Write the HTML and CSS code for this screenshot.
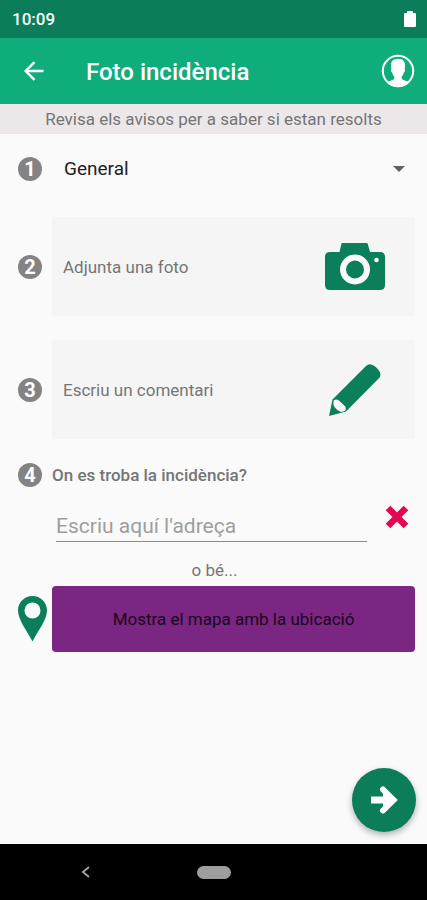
FILE: index.html
```html
<!DOCTYPE html>
<html lang="ca">
<head>
  <meta charset="utf-8">
  <meta name="viewport" content="width=device-width, initial-scale=1">
  <title>Foto incidència</title>
  <link rel="stylesheet" href="styles.css">
</head>
<body>
  <div class="status">
    <span>10:09</span>
    <svg class="battery" width="12" height="16" viewBox="0 0 12 16" aria-hidden="true"><path fill="#fff" d="M3 2V1q0-1 1-1h4q1 0 1 1v1h2q1 0 1 1v12q0 1-1 1H1q-1 0-1-1V3q0-1 1-1z"/></svg>
  </div>
  <header class="appbar">
    <button class="icon-button" type="button" aria-label="Enrere">
      <svg width="20" height="20" viewBox="0 0 20 20" fill="none" stroke="#fff" stroke-width="2.400"><path d="M19.500 10H2M10.500 1.200L1.700 10l8.800 8.800"/></svg>
    </button>
    <h1 class="title">Foto incidència</h1>
    <button class="icon-button" type="button" aria-label="Perfil">
      <svg width="34" height="34" viewBox="0 0 34 34"><circle cx="17" cy="17" r="15.200" fill="none" stroke="#fff" stroke-width="2"/><path fill="#fff" d="M17 4.800c5 0 7.400 2.700 7 7.400l-.3 2.800c.8.300.3 3-.8 3.500-.4 2-1.200 3.200-2.200 4.100v2.200c1.200 1.700 4.700 1.900 7.300 3.600C25.200 31.200 21.400 33 17 33S8.800 31.200 6 28.400c2.600-1.700 6.100-1.900 7.300-3.600v-2.200c-1-.9-1.800-2.100-2.200-4.100-1.100-.5-1.600-3.200-.8-3.500L10 12.200c-.4-4.700 2-7.400 7-7.400z"/></svg>
    </button>
  </header>
  <p class="notice">Revisa els avisos per a saber si estan resolts</p>

  <main class="content">
    <form class="form">
      <div class="row row-select">
        <span class="badge">1</span>
        <div class="select">
          <select class="select-field" aria-label="Tipus d'incidència"><option>General</option></select>
          <svg class="caret" width="12" height="6" viewBox="0 0 12 6" aria-hidden="true"><path fill="#616161" d="M0 0h12L6 6z"/></svg>
        </div>
      </div>

      <div class="row">
        <span class="badge">2</span>
        <button class="card" type="button">
          <span>Adjunta una foto</span>
          <svg width="60" height="48" viewBox="0 0 60 48" aria-hidden="true"><path fill="#0b7f5b" d="M17.500 0h24q1 0 1.300 1L45 9h10q5 0 5 5v28q0 5-5 5H5q-5 0-5-5V14q0-5 5-5h9.500l1.900-8q.2-1 1.100-1z"/><circle cx="30" cy="26.500" r="12" fill="#0b7f5b" stroke="#fafafa" stroke-width="6"/><circle cx="51.500" cy="17" r="2.300" fill="#fafafa"/></svg>
        </button>
      </div>

      <div class="row">
        <span class="badge">3</span>
        <button class="card" type="button">
          <span>Escriu un comentari</span>
          <svg width="60" height="54" viewBox="0 0 60 54" aria-hidden="true"><path fill="#0b7f5b" d="M4 53L7.500 36.500 41 3q4-4 9.500.8l2.200 2.200q5 5.500 1 9.500L21 48.500z"/><path fill="#fafafa" d="M8.800 37.200q2.500-1.500 4.500-.2l7 6.500q1.200 2.500-.3 4.300-2.500 1.500-5 .7-5.800-2.700-6.700-7.500z"/></svg>
        </button>
      </div>

      <div class="row">
        <span class="badge">4</span>
        <label class="question" for="address">On es troba la incidència?</label>
      </div>

      <div class="address">
        <input class="address-field" id="address" type="text" placeholder="Escriu aquí l'adreça">
        <button class="icon-button" type="button" aria-label="Esborra l'adreça">
          <svg width="24" height="24" viewBox="0 0 24 24"><path fill="none" stroke="#e6054f" stroke-width="6.500" d="M3 3l18 18M21 3L3 21"/></svg>
        </button>
      </div>

      <p class="or">o bé...</p>

      <div class="row">
        <svg class="pin" width="29" height="46" viewBox="0 0 29 46" aria-hidden="true"><path fill="#0b7f5b" fill-rule="evenodd" d="M14.500 0C6.500 0 0 6.300 0 14.300 0 24 8.500 34 14.500 45.500 20.500 34 29 24 29 14.300 29 6.300 22.500 0 14.500 0zm0 6.500a8 8 0 1 1 0 16 8 8 0 0 1 0-16z"/></svg>
        <button class="map-button" type="button">Mostra el mapa amb la ubicació</button>
      </div>
    </form>

    <button class="fab" type="button" aria-label="Continua">
      <svg width="28" height="28" viewBox="0 0 28 28"><path fill="none" stroke="#fff" stroke-width="7" d="M1 14h18"/><path fill="#fff" stroke="#fff" stroke-width="6" stroke-linecap="round" d="M13 3.500L23.500 14 13 24.500"/></svg>
    </button>
  </main>

  <nav class="navbar" aria-label="Sistema">
    <button class="icon-button" type="button" aria-label="Torna">
      <svg width="10" height="12" viewBox="0 0 10 12" fill="none" stroke="#9e9e9e" stroke-width="2"><path d="M8 1L2 6l6 5"/></svg>
    </button>
    <button class="home" type="button" aria-label="Inici"></button>
  </nav>
</body>
</html>
```

FILE: styles.css
```css
* {
  box-sizing: border-box;
}

body {
  margin: 0;
  min-height: 100vh;
  display: flex;
  flex-direction: column;
  background: #fafafa;
  color: #757575;
  font-family: Roboto, sans-serif;
  font-size: 17px;
  line-height: 20px;
}

button,
input,
select {
  margin: 0;
  padding: 0;
  border: 0;
  background: none;
  color: inherit;
  font: inherit;
}

p,
h1 {
  margin: 0;
}

svg {
  display: block;
  flex: none;
}

.status {
  display: flex;
  align-items: center;
  justify-content: space-between;
  height: 38px;
  padding: 0 11px 0 12px;
  background: #0b7d5a;
  color: #fff;
  font-weight: 500;
}

.appbar {
  display: flex;
  align-items: center;
  height: 66px;
  padding: 0 12px 0 24px;
  background: #0fad7c;
  color: #fff;
}

.title {
  flex: 1;
  padding: 2px 0 0 42px;
  font-size: 24px;
  font-weight: 500;
  line-height: 32px;
}

.notice {
  padding: 5px 0;
  background: #ece8ea;
  text-align: center;
}

.content {
  position: relative;
  flex: 1;
}

.form {
  display: flex;
  flex-direction: column;
  gap: 24px;
  padding: 11px 12px 24px 18px;
}

.row {
  display: grid;
  grid-template-columns: 34px 1fr;
  align-items: center;
}

.badge {
  display: flex;
  align-items: center;
  justify-content: center;
  width: 24px;
  height: 24px;
  border-radius: 50%;
  background: #858283;
  color: #fff;
  font-size: 20px;
  font-weight: 700;
}

.row-select {
  height: 48px;
}

.select {
  display: grid;
  align-items: center;
}

.select-field,
.caret {
  grid-area: 1 / 1;
}

.select-field {
  width: 100%;
  height: 48px;
  padding-left: 12px;
  appearance: none;
  color: #212121;
  font-size: 19px;
}

.caret {
  justify-self: end;
  margin-right: 10px;
  pointer-events: none;
}

.card {
  display: flex;
  align-items: center;
  justify-content: space-between;
  height: 99px;
  padding: 0 30px 0 11px;
  background: #f5f5f5;
}

.question {
  font-weight: 500;
}

.address {
  display: flex;
  align-items: center;
  gap: 18px;
  padding: 0 6px 0 38px;
}

.address-field {
  flex: 1;
  min-width: 0;
  height: 31px;
  border-bottom: 1px solid #8a8a8a;
  font-size: 21px;
}

.address-field::placeholder {
  color: #9e9e9e;
  opacity: 1;
}

.address .icon-button {
  align-self: flex-start;
  margin-top: -6px;
}

.or {
  margin: -6px 4px -18px 0;
  text-align: center;
}

.map-button {
  height: 66px;
  border-radius: 4px;
  background: #7b2682;
  color: #18051a;
  font-size: 17px;
}

.fab {
  position: absolute;
  right: 11px;
  bottom: 12px;
  display: flex;
  align-items: center;
  justify-content: center;
  width: 64px;
  height: 64px;
  border-radius: 50%;
  background: #0b7d5a;
  box-shadow: 0 3px 6px rgba(0, 0, 0, 0.3);
}

.navbar {
  display: grid;
  grid-template-columns: 1fr auto 1fr;
  align-items: center;
  height: 56px;
  background: #000;
}

.navbar .icon-button {
  justify-self: center;
  padding-right: 24px;
}

.home {
  width: 34px;
  height: 13px;
  border-radius: 7px;
  background: #9e9e9e;
}
```
